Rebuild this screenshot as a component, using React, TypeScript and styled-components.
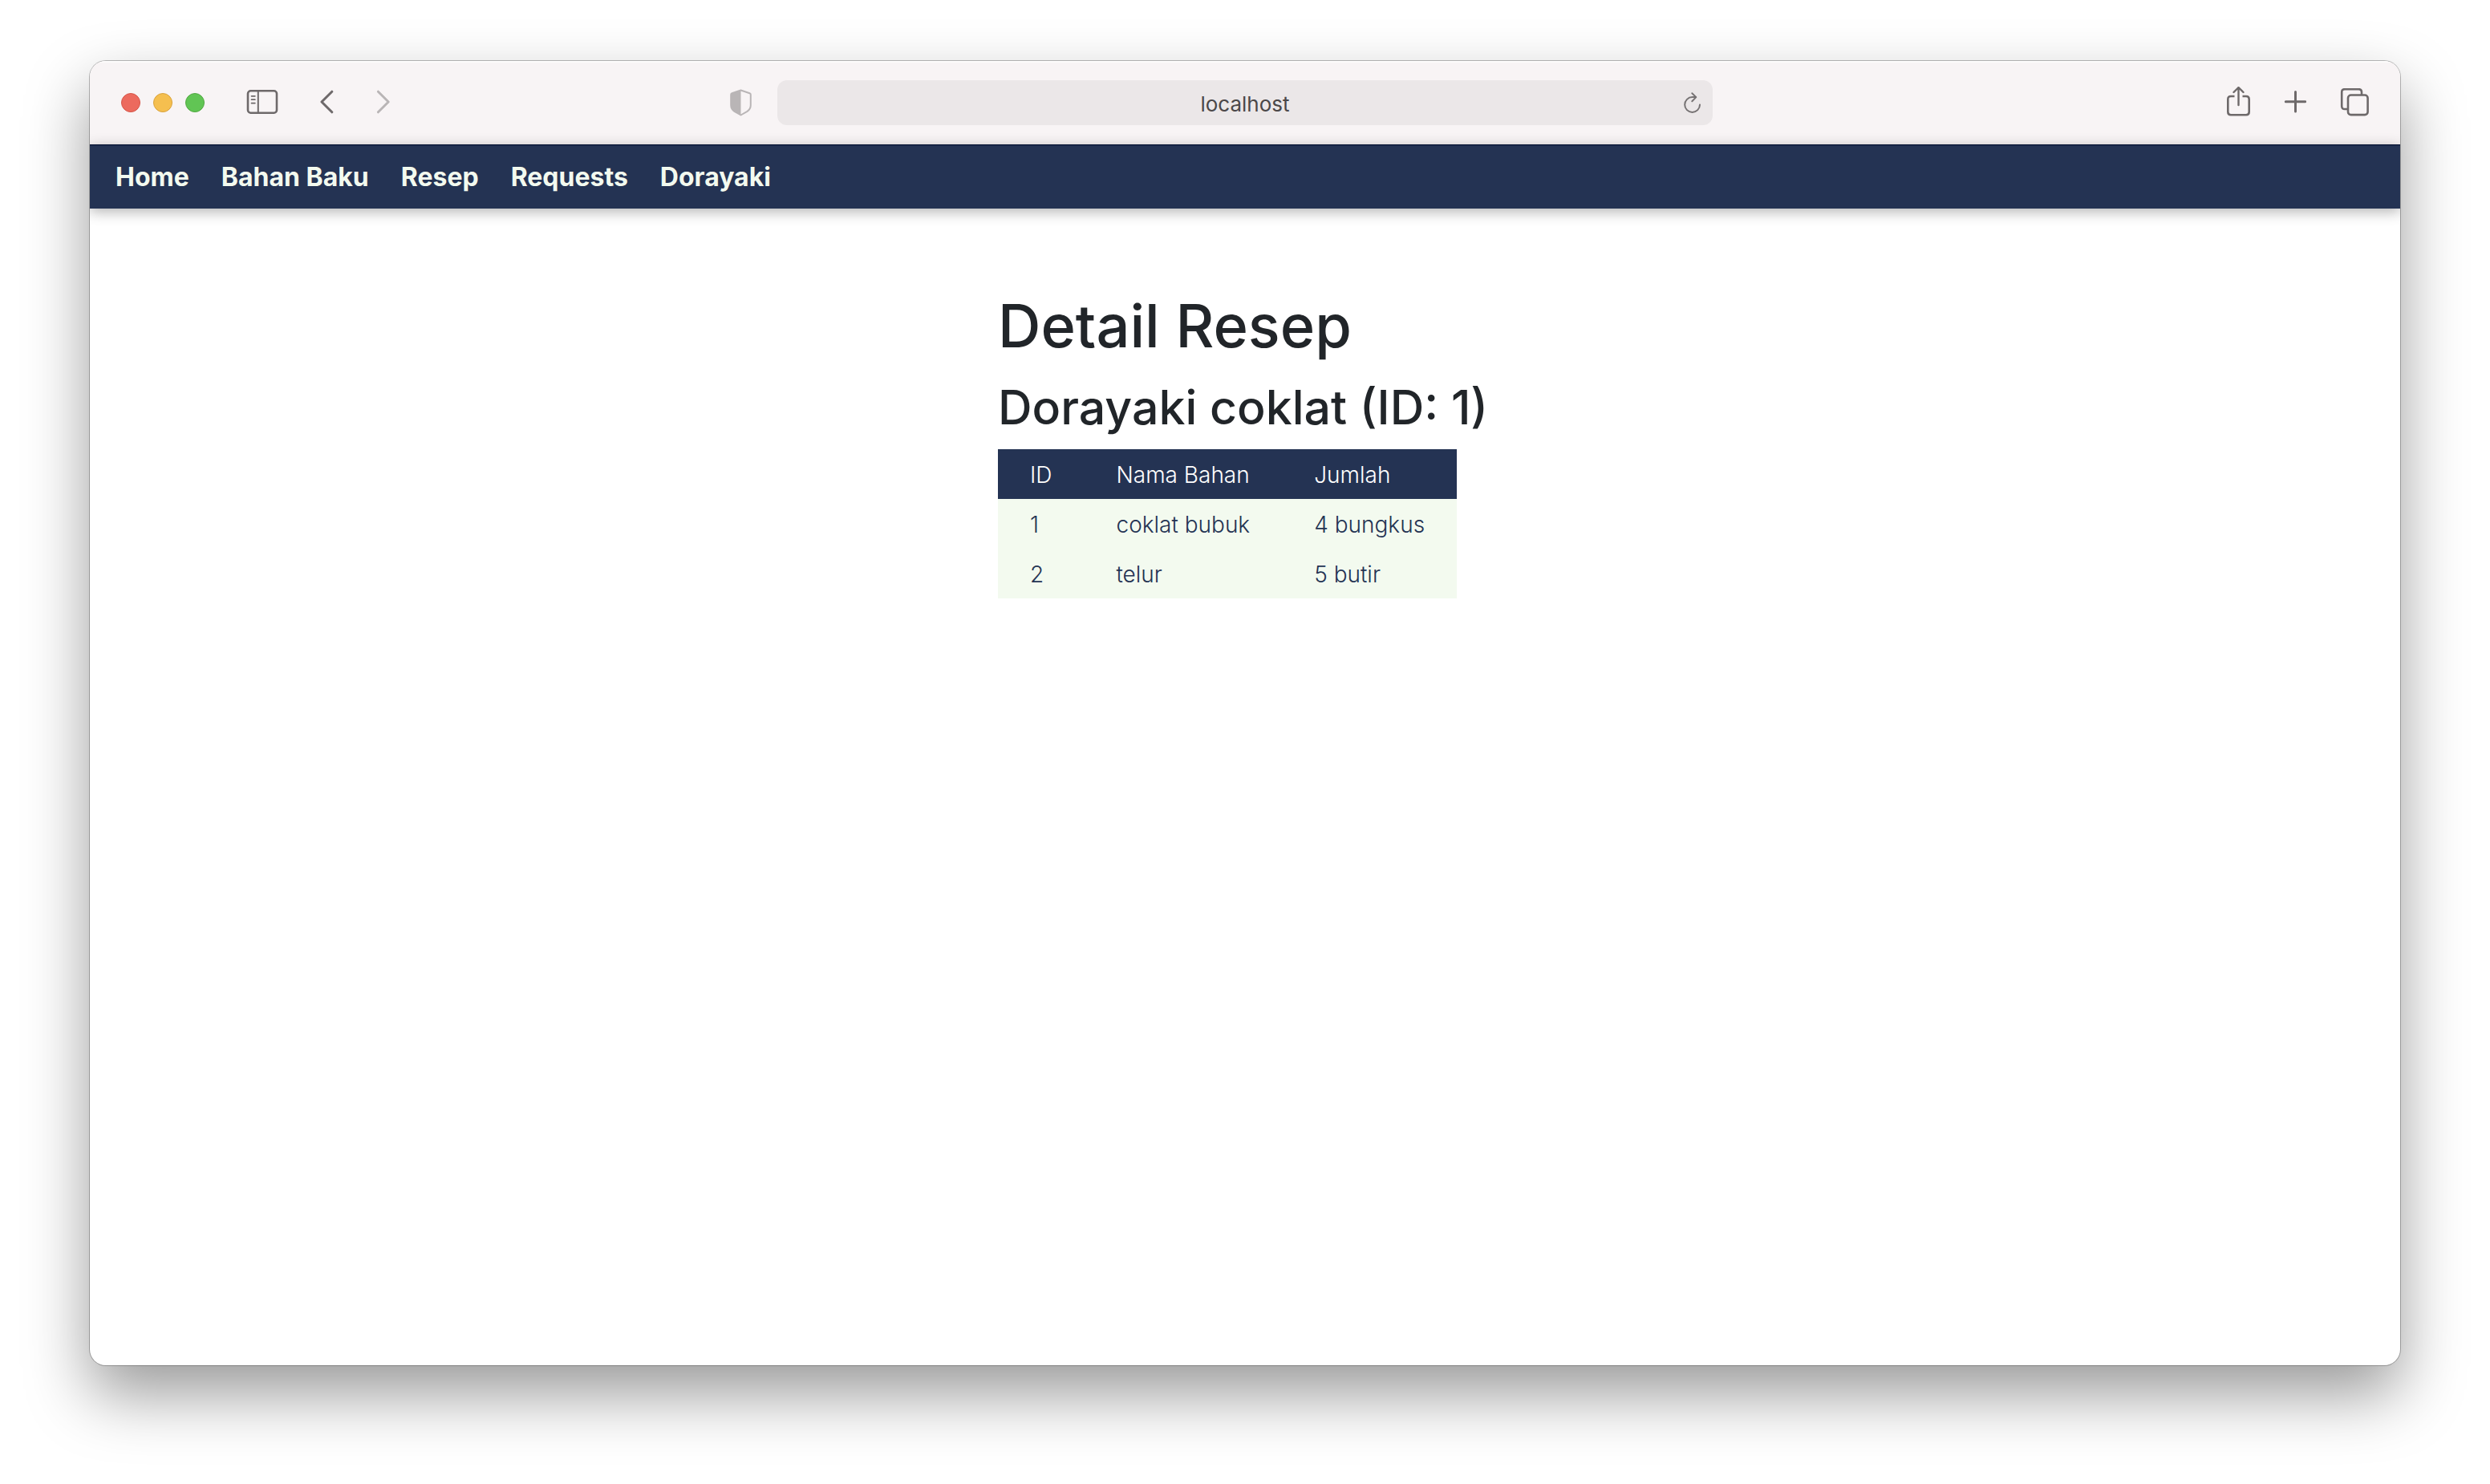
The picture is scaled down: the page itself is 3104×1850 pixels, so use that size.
import React from "react";
import styled, { createGlobalStyle } from "styled-components";

const GlobalStyle = createGlobalStyle`
  *, *::before, *::after { box-sizing: border-box; }
  body {
    margin: 0;
    background: #ffffff;
    color: #212529;
    font-family: Inter, "Liberation Sans", sans-serif;
  }
`;

const Desktop = styled.div`
  display: flex;
  min-height: 100vh;
  padding: 76px 112px 148px;
`;

const Window = styled.div`
  flex: 1;
  min-width: 0;
  display: flex;
  flex-direction: column;
  overflow: hidden;
  border-radius: 20px;
  background: #ffffff;
  box-shadow: 0 0 0 1px rgba(0, 0, 0, 0.26), 0 36px 80px rgba(0, 0, 0, 0.4);
`;

const Toolbar = styled.header`
  display: grid;
  grid-template-columns: 1fr minmax(0, 1166px) 1fr;
  align-items: center;
  column-gap: 32px;
  height: 104px;
  padding: 0 39px;
  background: #f8f4f5;
  box-shadow: inset 0 2px 0 #fdfcfc;
`;

const ToolGroup = styled.div<{ $gap: number; $end?: boolean }>`
  display: flex;
  align-items: center;
  justify-content: ${(p) => (p.$end ? "flex-end" : "flex-start")};
  gap: ${(p) => p.$gap}px;
`;

const Light = styled.button<{ $fill: string; $rim: string }>`
  width: 24px;
  height: 24px;
  padding: 0;
  border: 1px solid ${(p) => p.$rim};
  border-radius: 50%;
  background: ${(p) => p.$fill};
`;

const IconButton = styled.button<{ $color?: string; $push?: boolean }>`
  display: flex;
  padding: 0;
  border: 0;
  background: none;
  color: ${(p) => p.$color ?? "#6e696a"};
  margin-left: ${(p) => (p.$push ? "auto" : "0")};

  svg {
    display: block;
    fill: none;
    stroke: currentColor;
    stroke-width: 2.6;
    stroke-linecap: round;
    stroke-linejoin: round;
  }
`;

const AddressBar = styled.div`
  display: flex;
  align-items: center;
  height: 56px;
  padding: 0 14px 0 36px;
  border-radius: 12px;
  background: #ebe7e8;
`;

const AddressInput = styled.input`
  flex: 1;
  min-width: 0;
  padding: 4px 0 0;
  border: 0;
  outline: 0;
  background: transparent;
  color: #4b4849;
  font: 400 26px/32px Inter, "Liberation Sans", sans-serif;
  text-align: center;
`;

const NavBar = styled.nav`
  display: flex;
  align-items: center;
  gap: 40px;
  height: 80px;
  padding: 2px 32px 0;
  background: #243353;
  box-shadow: inset 0 1px 0 #030f2f, inset 0 2px 0 #1c2b4c, 0 4px 16px rgba(0, 0, 0, 0.3);
`;

const NavLink = styled.a`
  color: #f3faef;
  font-size: 32px;
  font-weight: 700;
  line-height: 40px;
  text-decoration: none;
`;

const Page = styled.main`
  width: 616px;
  max-width: 100%;
  margin: 0 auto;
  padding: 98px 0;
  white-space: nowrap;
`;

const Title = styled.h1`
  margin: 0 0 16px;
  font-size: 74px;
  font-weight: 500;
  line-height: 96px;
`;

const Subtitle = styled.h2`
  margin: 0 0 14px;
  font-size: 59px;
  font-weight: 500;
  line-height: 76px;
`;

const Table = styled.table`
  border-collapse: collapse;
  background: #f3faef;
  color: #243353;
  font-size: 28px;
  font-weight: 300;
  line-height: 42px;
`;

const HeadRow = styled.tr`
  background: #243353;
  color: #ffffff;
`;

const HeadCell = styled.th`
  padding: 11px 40px 9px;
  font-weight: 300;
  text-align: left;
`;

const Cell = styled.td`
  padding: 11px 40px 9px;
`;

const links = ["Home", "Bahan Baku", "Resep", "Requests", "Dorayaki"];

const columns = ["ID", "Nama Bahan", "Jumlah"];

const ingredients = [
  { id: 1, name: "coklat bubuk", amount: "4 bungkus" },
  { id: 2, name: "telur", amount: "5 butir" },
];

const SidebarIcon = () => (
  <svg width="40" height="32" viewBox="0 1 40 32">
    <rect x="2" y="2.3" width="36" height="27.4" rx="3.5" />
    <path d="M14.800 2.500v27" strokeWidth="2" />
    <path d="M6.500 8.800h4.400M6.500 13.200h4.400M6.500 17.600h4.400" strokeWidth="1.700" />
  </svg>
);

const BackIcon = () => (
  <svg width="18" height="32" viewBox="0 1 18 32">
    <path d="M14.800 3.200L2 16L14.800 28.800" strokeWidth="3" />
  </svg>
);

const ForwardIcon = () => (
  <svg width="18" height="32" viewBox="0 1 18 32">
    <path d="M2.400 3.200L15.200 16L2.400 28.800" strokeWidth="3" />
  </svg>
);

const ShieldIcon = () => (
  <svg width="28" height="34" viewBox="0 0 28 34">
    <path d="M14.500 1.500L25.500 5.200Q26.800 5.700 26.800 7V20Q26.800 25 22.500 27.800L14.500 32.500L6.500 27.800Q2.200 25 2.200 20V7Q2.200 5.700 3.500 5.200Z" strokeWidth="2" />
    <path d="M14.500 1.500V32.500L6.500 27.800Q2.200 25 2.200 20V7Q2.200 5.700 3.500 5.200Z" fill="currentColor" stroke="none" />
  </svg>
);

const ReloadIcon = () => (
  <svg width="22" height="28" viewBox="0 0 22 28">
    <path d="M20 16.500A9.400 9.400 0 1 1 10.600 7.100H15" strokeWidth="2" />
    <path d="M10.300 2.300L15.300 7.100L10.300 12.200" strokeWidth="2" />
  </svg>
);

const ShareIcon = () => (
  <svg width="30" height="40" viewBox="0 2 30 40">
    <path d="M10.500 14H6Q2.300 14 2.300 17.700V33.500Q2.300 37.200 6 37.200H25Q28.700 37.200 28.700 33.500V17.700Q28.700 14 25 14H20.500" strokeLinecap="butt" />
    <path d="M15.500 25V3.400M9.500 9L15.500 3L21.500 9" strokeWidth="2.400" />
  </svg>
);

const PlusIcon = () => (
  <svg width="28" height="32" viewBox="0 1 28 32">
    <path d="M14.500 3.500V28M2.300 15.700H26.700" strokeWidth="3" />
  </svg>
);

const TabsIcon = () => (
  <svg width="36" height="36" viewBox="0 1 36 36">
    <path d="M9.500 27H6Q2.200 27 2.200 23.200V6Q2.200 2.200 6 2.200H23.200Q27 2.200 27 6V9.500" strokeLinecap="butt" />
    <rect x="10" y="9.500" width="24.600" height="24.600" rx="3.700" />
  </svg>
);

export default function App() {
  return (
    <>
      <GlobalStyle />
      <Desktop>
        <Window>
          <Toolbar>
            <ToolGroup $gap={52}>
              <ToolGroup $gap={16}>
                <Light type="button" aria-label="Close" $fill="#ec6a5e" $rim="#d65548" />
                <Light type="button" aria-label="Minimize" $fill="#f5bf4f" $rim="#d9a23c" />
                <Light type="button" aria-label="Zoom" $fill="#61c554" $rim="#52a842" />
              </ToolGroup>
              <IconButton type="button" aria-label="Show sidebar"><SidebarIcon /></IconButton>
              <IconButton type="button" aria-label="Back"><BackIcon /></IconButton>
              <IconButton type="button" aria-label="Forward" $color="#b9b5b6"><ForwardIcon /></IconButton>
              <IconButton type="button" aria-label="Privacy report" $color="#b9b5b6" $push><ShieldIcon /></IconButton>
            </ToolGroup>
            <AddressBar>
              <AddressInput type="text" aria-label="Address" defaultValue="localhost" />
              <IconButton type="button" aria-label="Reload" $color="#767273"><ReloadIcon /></IconButton>
            </AddressBar>
            <ToolGroup $gap={42} $end>
              <IconButton type="button" aria-label="Share"><ShareIcon /></IconButton>
              <IconButton type="button" aria-label="New tab"><PlusIcon /></IconButton>
              <IconButton type="button" aria-label="Tab overview"><TabsIcon /></IconButton>
            </ToolGroup>
          </Toolbar>
          <NavBar>
            {links.map((label) => (
              <NavLink key={label} href="#">{label}</NavLink>
            ))}
          </NavBar>
          <Page>
            <Title>Detail Resep</Title>
            <Subtitle>Dorayaki coklat (ID: 1)</Subtitle>
            <Table>
              <thead>
                <HeadRow>
                  {columns.map((label) => (
                    <HeadCell key={label} scope="col">{label}</HeadCell>
                  ))}
                </HeadRow>
              </thead>
              <tbody>
                {ingredients.map((item) => (
                  <tr key={item.id}>
                    <Cell>{item.id}</Cell>
                    <Cell>{item.name}</Cell>
                    <Cell>{item.amount}</Cell>
                  </tr>
                ))}
              </tbody>
            </Table>
          </Page>
        </Window>
      </Desktop>
    </>
  );
}
